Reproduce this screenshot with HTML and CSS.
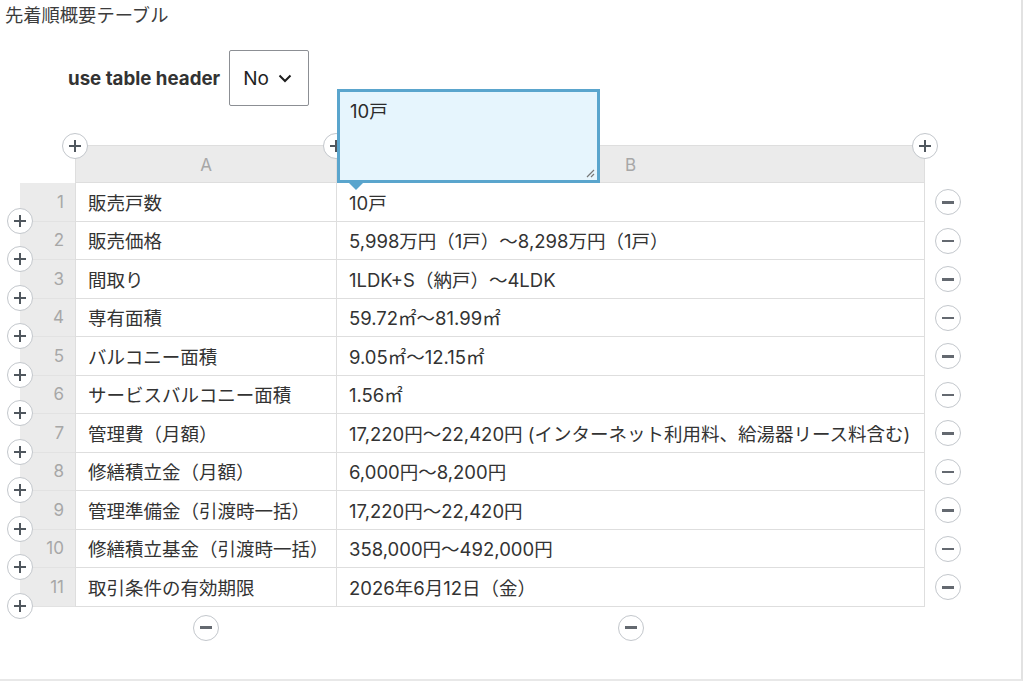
FILE: index.html
```html
<!DOCTYPE html>
<html lang="ja">
<head>
<meta charset="utf-8">
<title>先着順概要テーブル</title>
<link rel="stylesheet" href="styles.css">
</head>
<body>
<div class="page">
  <h1 class="title">先着順概要テーブル</h1>
  <div class="controls">
    <span class="ctl-label">use table header</span>
    <div class="select">
      <span>No</span>
      <svg class="chev" width="14" height="9" viewBox="0 0 14 9"><path d="M1.5 1.5 L7 7 L12.5 1.5" fill="none" stroke="#1e1e1e" stroke-width="2"/></svg>
    </div>
  </div>
  <div class="sheet">
    <div class="corner"></div>
    <div class="colhead">A<span class="btn plus pos-tl"></span></div>
    <div class="colhead">B<span class="btn plus pos-tl"></span><span class="btn plus pos-tr"></span>
      <div class="editor">
        <div class="editor-text">10戸</div>
        <svg class="grip" width="10" height="10" viewBox="0 0 10 10"><path d="M9 2 L2 9 M9 6 L6 9" stroke="#777" stroke-width="1.2"/></svg>
        <span class="editor-arrow"></span>
      </div>
    </div>
    <div class="blank"></div>

    <div class="rownum">1<span class="btn plus pos-bl"></span></div><div class="cell">販売戸数</div><div class="cell">10戸</div><div class="rowctl"><span class="btn minus"></span></div>
    <div class="rownum">2<span class="btn plus pos-bl"></span></div><div class="cell">販売価格</div><div class="cell">5,998万円（1戸）〜8,298万円（1戸）</div><div class="rowctl"><span class="btn minus"></span></div>
    <div class="rownum">3<span class="btn plus pos-bl"></span></div><div class="cell">間取り</div><div class="cell">1LDK+S（納戸）〜4LDK</div><div class="rowctl"><span class="btn minus"></span></div>
    <div class="rownum">4<span class="btn plus pos-bl"></span></div><div class="cell">専有面積</div><div class="cell">59.72㎡〜81.99㎡</div><div class="rowctl"><span class="btn minus"></span></div>
    <div class="rownum">5<span class="btn plus pos-bl"></span></div><div class="cell">バルコニー面積</div><div class="cell">9.05㎡〜12.15㎡</div><div class="rowctl"><span class="btn minus"></span></div>
    <div class="rownum">6<span class="btn plus pos-bl"></span></div><div class="cell">サービスバルコニー面積</div><div class="cell">1.56㎡</div><div class="rowctl"><span class="btn minus"></span></div>
    <div class="rownum">7<span class="btn plus pos-bl"></span></div><div class="cell">管理費（月額）</div><div class="cell">17,220円〜22,420円 (インターネット利用料、給湯器リース料含む)</div><div class="rowctl"><span class="btn minus"></span></div>
    <div class="rownum">8<span class="btn plus pos-bl"></span></div><div class="cell">修繕積立金（月額）</div><div class="cell">6,000円〜8,200円</div><div class="rowctl"><span class="btn minus"></span></div>
    <div class="rownum">9<span class="btn plus pos-bl"></span></div><div class="cell">管理準備金（引渡時一括）</div><div class="cell">17,220円〜22,420円</div><div class="rowctl"><span class="btn minus"></span></div>
    <div class="rownum">10<span class="btn plus pos-bl"></span></div><div class="cell">修繕積立基金（引渡時一括）</div><div class="cell">358,000円〜492,000円</div><div class="rowctl"><span class="btn minus"></span></div>
    <div class="rownum">11<span class="btn plus pos-bl"></span></div><div class="cell">取引条件の有効期限</div><div class="cell">2026年6月12日（金）</div><div class="rowctl"><span class="btn minus"></span></div>

    <div class="blank"></div>
    <div class="colctl"><span class="btn minus"></span></div>
    <div class="colctl"><span class="btn minus"></span></div>
    <div class="blank"></div>
  </div>
</div>
</body>
</html>
```

FILE: styles.css
```css
* { box-sizing: border-box; }
html, body { margin: 0; padding: 0; background: #fff; }
body {
  font-family: Inter, "Noto Sans CJK JP", sans-serif;
  color: #333;
}
.page {
  width: 1023px;
  height: 681px;
  border-right: 2px solid #e2e2e2;
  border-bottom: 2px solid #e8e8e8;
  overflow: hidden;
}
.title {
  margin: 0;
  padding: 3px 0 0 5px;
  font-family: "Noto Sans CJK JP", sans-serif;
  font-weight: 400;
  font-size: 18.3px;
  line-height: 22px;
  color: #3c3c3c;
}
.controls {
  display: flex;
  align-items: center;
  gap: 9px;
  margin-top: 25px;
  padding-left: 68px;
}
.ctl-label {
  font-weight: 700;
  font-size: 18.7px;
  color: #333;
}
.select {
  width: 80px;
  height: 56px;
  border: 1px solid #8c8f94;
  border-radius: 2px;
  display: flex;
  align-items: center;
  padding-left: 13px;
  gap: 9px;
  font-size: 19px;
  color: #1e1e1e;
}
.chev { margin-top: 1px; }

.sheet {
  margin: 39px 0 0 20px;
  display: grid;
  grid-template-columns: 55px 262px 588px 46px;
  grid-template-rows: 38px repeat(11, 38.5px) 42px;
  font-size: 18.5px;
}
.corner, .blank { background: transparent; }
.colhead {
  position: relative;
  background: #ebebeb;
  border-top: 1px solid #dedede;
  border-right: 1px solid #dedede;
  border-bottom: 1px solid #dedede;
  display: flex;
  align-items: center;
  justify-content: center;
  color: #a7a7a7;
  font-size: 17px;
  padding-top: 2px;
}
.colhead:nth-child(2) { border-left: 1px solid #dedede; }
.rownum {
  position: relative;
  background: #ebebeb;
  border-bottom: 1px solid #e2e2e2;
  display: flex;
  align-items: center;
  justify-content: flex-end;
  padding-right: 11px;
  color: #a7a7a7;
  font-size: 17px;
}
.cell {
  border-right: 1px solid #dedede;
  border-bottom: 1px solid #dedede;
  display: flex;
  align-items: center;
  padding-left: 12px;
  white-space: nowrap;
  color: #333;
}
.rownum + .cell { border-left: 1px solid #dedede; }
.rowctl, .colctl {
  display: flex;
  align-items: center;
  justify-content: center;
}

.btn {
  display: inline-block;
  width: 26px;
  height: 26px;
  border-radius: 50%;
  border: 1.5px solid #c3c7cc;
  background: #fff;
  position: relative;
  flex: none;
}
.btn::before, .btn::after {
  content: "";
  position: absolute;
  left: 50%;
  top: 50%;
  background: #50575e;
}
.btn::before { width: 12px; height: 2px; margin: -1px 0 0 -6px; }
.plus::after { width: 2px; height: 12px; margin: -6px 0 0 -1px; }
.minus::before { width: 12px; height: 2.5px; margin: -1.25px 0 0 -6px; background: #646970; }
.minus::after { display: none; }

.pos-tl { position: absolute; left: -14px; top: -13px; z-index: 2; }
.pos-tr { position: absolute; right: -14px; top: -13px; z-index: 2; }
.pos-bl { position: absolute; left: -13px; bottom: -13px; z-index: 2; }

.editor {
  position: absolute;
  left: 0;
  bottom: -1px;
  width: 263px;
  height: 94px;
  background: #e6f5fd;
  border: 3px solid #5aa5cd;
  z-index: 5;
}
.editor-text {
  padding: 5px 0 0 10px;
  font-size: 18.5px;
  color: #2b2b2b;
  text-align: left;
}
.grip { position: absolute; right: 2px; bottom: 2px; }
.editor-arrow {
  position: absolute;
  left: 9px;
  bottom: -10px;
  width: 0;
  height: 0;
  border-left: 7px solid transparent;
  border-right: 7px solid transparent;
  border-top: 7px solid #5aa5cd;
}
```
